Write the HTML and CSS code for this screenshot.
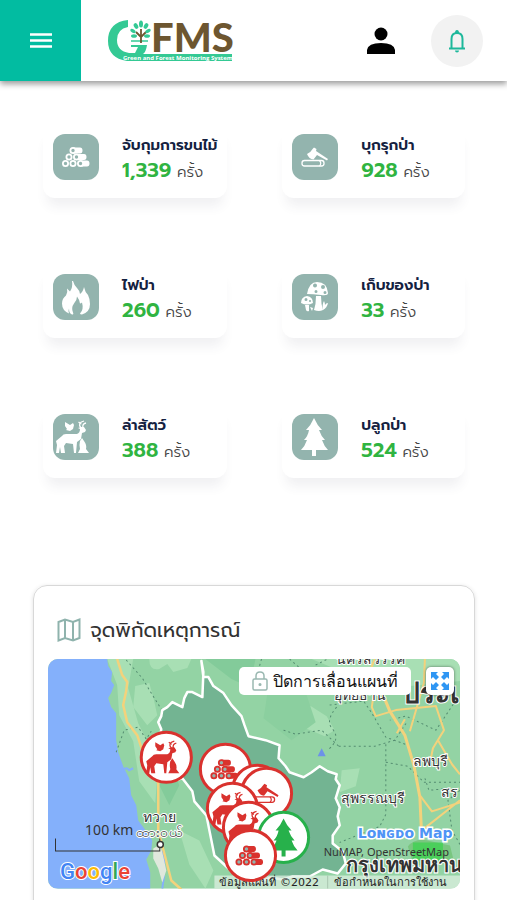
FILE: index.html
```html
<!DOCTYPE html>
<html lang="th">
<head>
<meta charset="utf-8">
<meta name="viewport" content="width=device-width, initial-scale=1">
<title>GFMS</title>
<link rel="stylesheet" href="styles.css">
</head>
<body>
<svg class="sprite" aria-hidden="true">
  <symbol id="logs" viewBox="0 0 46 46">
    <path fill="currentColor" d="M20 13.500h7q2.500 0 2.500 3t-2.500 3h-7zM23 20h8q2.500 0 2.500 3t-2.500 3h-8zM27 26.500h7q2.500 0 2.500 3t-2.500 3h-7z"/>
    <g class="log-ends" stroke="currentColor" stroke-width="1.800">
      <circle cx="20" cy="16.500" r="2.600"/><circle cx="16" cy="23" r="2.600"/><circle cx="23.500" cy="23" r="2.600"/>
      <circle cx="12.500" cy="29.500" r="2.600"/><circle cx="20" cy="29.500" r="2.600"/><circle cx="27.500" cy="29.500" r="2.600"/>
    </g>
  </symbol>
  <symbol id="axe" viewBox="0 0 46 46">
    <rect x="10" y="26.500" width="22" height="5.500" rx="2.500" fill="none" stroke="currentColor" stroke-width="1.300"/>
    <path d="M27.500 26.500q2.500 3 0 5.500" fill="none" stroke="currentColor" stroke-width="1.200"/>
    <path fill="currentColor" d="M15 20q4-2 6-5.500l1-1 2.500 1.500-.5 2L36 25l-1 1.600L25 21l-3.500 4.500q-4.500-.5-6.500-5.500z"/>
  </symbol>
  <symbol id="fire" viewBox="0 0 46 46">
    <path fill="currentColor" d="M20 7q1 4 4 7 3 3 3 6 3-2 4-7 1 5 4 8 2 4 2 9 0 8-8 10.500-2 0-2-1 4-4 2-11-1 1-2 1 0-3-3-7 0 4-3 7-3 4-1 9 1 2-1 2-3-1-3-6-1 2 0 5-7-3-7-10 0-5 4-8 2-3 1-7l3 3q3-4 2-10.500z"/>
  </symbol>
  <symbol id="mushroom" viewBox="0 0 46 46">
    <path fill="currentColor" fill-rule="evenodd" d="M15 20Q17 8 25 8q10 0 11 11 0 3-7 2-8-1-14-1zM23 9.500a2 2 0 100 4 2 2 0 000-4zM31 11a2 2 0 100 4 2 2 0 000-4zM24 16a1.500 1.500 0 100 3 1.500 1.500 0 000-3zM33 17a1.500 1.500 0 100 3 1.500 1.500 0 000-3z"/>
    <path fill="currentColor" d="M24 22h5q0 8 2 14-4 2-9 0 2-6 2-14zM13 31h4v6q-2 1-3-1zM31 36q-1-6 1-9 1 2 1 4 1-2 3-2-1 5-5 7zM20 37l-2-4 3 1z"/>
    <path fill="currentColor" fill-rule="evenodd" d="M9 29q0-6 6-7 6 1 6 7-6 3-12 0zM14 24a1.500 1.500 0 100 3 1.500 1.500 0 000-3zM18 26a1 1 0 100 2 1 1 0 000-2z"/>
  </symbol>
  <symbol id="deer" viewBox="0 0 46 46">
    <path fill="currentColor" d="M12 8l5 3 3-2 1 2-1 4-3 2-4-1 1-1-2-3zM9 22q1-2 4-2h11q3-1 3-5l-2-1 3-1h3l2 3-1 2-3 1-1 6-4 3-1 11h-2l-1-9-7-1-2 3 1 7h-4l-1-6-1 6h-3l1-8-1-4z"/>
    <path fill="none" stroke="currentColor" stroke-width="1.300" d="M28 14q-4-5 3-7M28.500 10l-3-2M30 14q-1-4 3-5"/>
    <path fill="currentColor" d="M27 27l2-3 2 3q3 4 2 8l3 4H25l2-4q-1-4 0-8z"/>
  </symbol>
  <symbol id="tree" viewBox="0 0 46 46">
    <path fill="currentColor" d="M22 4q3 7 8 12h-3q2 6 6 10h-3q2 6 6 10H24v6h-4v-6H9q4-4 6-10h-3q4-4 5-10h-3q5-5 8-12z"/>
  </symbol>
</svg>

<header class="topbar">
  <button class="menu" type="button" aria-label="เมนู">
    <svg width="22" height="16" viewBox="0 0 22 16"><path d="M0 1.500h22M0 7.500h22M0 13.500h22" stroke="#fff" stroke-width="2.400"/></svg>
  </button>
  <a class="logo" href="#" aria-label="GFMS">
    <svg width="128" height="44" viewBox="0 0 128 44">
      <path fill="#34c994" d="M21 1v7Q10 10 10 21q0 11 12 13h6l3-6h-7v-2h16q-1 7-4 9h89v7H20Q1 39 1 22 1 3 21 1z"/>
      <path stroke="#34c994" stroke-width="1.500" d="M24 22h17"/>
      <path fill="none" stroke="#6d5630" stroke-width="1.800" d="M34 24V10M34 18l-5-5M34 18l5-5"/>
      <g fill="#34c994"><ellipse cx="34" cy="5" rx="2" ry="3.500"/><ellipse cx="29" cy="7" rx="2" ry="3" transform="rotate(-30 29 7)"/><ellipse cx="39" cy="7" rx="2" ry="3" transform="rotate(30 39 7)"/><ellipse cx="26" cy="12" rx="3" ry="1.800" transform="rotate(30 26 12)"/><ellipse cx="41" cy="12" rx="3" ry="1.800" transform="rotate(-30 41 12)"/><ellipse cx="27" cy="17" rx="3" ry="1.800"/><ellipse cx="40" cy="17" rx="3" ry="1.800"/></g>
      <text class="logo-name" x="44" y="33">FMS</text>
      <text class="logo-tag" x="16" y="41">Green and Forest Monitoring System</text>
    </svg>
  </a>
  <button class="user" type="button" aria-label="ผู้ใช้">
    <svg width="28" height="28" viewBox="0 0 28 28"><circle cx="14" cy="7" r="6.500"/><path d="M0 27v-4q1-7 14-7t14 7v4z"/></svg>
  </button>
  <button class="bell" type="button" aria-label="แจ้งเตือน">
    <svg width="18" height="24" viewBox="0 0 18 24"><path d="M3.500 19V10q0-6 5.500-6t5.500 6v9" fill="none" stroke="#1db89b" stroke-width="2"/><path d="M1 19.500h16" stroke="#1db89b" stroke-width="2"/><path d="M7 4q0-3 2-3t2 3zM7 21.500h4q0 2-2 2t-2-2z" fill="#1db89b"/></svg>
  </button>
</header>

<main>
  <section class="stats">
    <article class="stat"><span class="tile"><svg><use href="#logs"/></svg></span><div><h2>จับกุมการขนไม้</h2><p><strong>1,339</strong> ครั้ง</p></div></article>
    <article class="stat"><span class="tile"><svg><use href="#axe"/></svg></span><div><h2>บุกรุกป่า</h2><p><strong>928</strong> ครั้ง</p></div></article>
    <article class="stat"><span class="tile"><svg><use href="#fire"/></svg></span><div><h2>ไฟป่า</h2><p><strong>260</strong> ครั้ง</p></div></article>
    <article class="stat"><span class="tile"><svg><use href="#mushroom"/></svg></span><div><h2>เก็บของป่า</h2><p><strong>33</strong> ครั้ง</p></div></article>
    <article class="stat"><span class="tile"><svg><use href="#deer"/></svg></span><div><h2>ล่าสัตว์</h2><p><strong>388</strong> ครั้ง</p></div></article>
    <article class="stat"><span class="tile"><svg><use href="#tree"/></svg></span><div><h2>ปลูกป่า</h2><p><strong>524</strong> ครั้ง</p></div></article>
  </section>

  <section class="events">
    <h2 class="events-title">
      <svg width="24" height="24" viewBox="0 0 24 24" fill="none" stroke="#8fb3ad" stroke-width="2"><path d="M1.500 4L8 1.500l8 2.500 6.500-2.500V20L16 22.500 8 20l-6.500 2.500zM8 1.500V20M16 4v18.500"/></svg>
      จุดพิกัดเหตุการณ์
    </h2>
    <div class="map">
      <svg class="map-canvas" viewBox="49 659 411 229">
        <rect x="49" y="659" width="411" height="229" fill="#93d3a4"/>
        <g fill="#a8dfb4">
          <path d="M108 659l10 26 2 30 14 26 6 40 16 22 3-40-20-40-10-35 5-29z"/>
          <path d="M150 659q0 12 10 10l8-5 6 8 14-4 4-9zM136 686l14-3 4 14 4 18-10 10-14-18zM295 712l16-6 16 10 8 14-10 6-14-6-12-4zM312 659h148v22l-60 6-40-8zM342 770l18-2-4 18-16 6zM180 830l20 10 14 30-8 18-16-24z"/>
        </g>
        <path fill="#83cb9a" d="M206 659h50l-6 28-18-8zM160 735l20 50-10 20-10-20z"/>
        <path fill="#8bcf9f" d="M270 680l36 12 10 30-24 18-28-22z"/>
        <path fill="#84b0fb" d="M49 659h59l1 7 4 6-1 9 3 4-3 8-3 5 3 9 5 6v27l2 12 5 14 6 12 2 17 5 10 2 15 9 12 5 8-1 10-5 9 4 13v16H49z"/>
        <path fill="none" stroke="#84b0fb" stroke-width="2" d="M122 773q4-8 8-3l4-2M163 850q4 16 0 38"/>
        <path fill="#e0e8dd" d="M154 848l7-4 3 12 3 14-4 12-4-14-5-10z"/>
        <path fill="none" stroke="#548c70" stroke-dasharray="2 3" d="M127 660l16 18 9 15 15 24M117 752l8-22 14-3 8 12 5-8M262 659l-4 14M290 659l9 8M316 665l12-6M337 707q-12 14-4 22 8 10-4 20M284 730l12 4 26-4 17 16M339 746l36 0 20-6 12-18M330 705l34-4 8 12 14 24 22 8M386 744l0 70-6 12-40 16M386 762l22 4 16 16 36 0M456 700l-20 30-30-14-16 4M425 778l4 12 20-2M460 790l-12 10 4 30 8 14"/>
        <g fill="none" stroke="#f3d27c" stroke-width="2" stroke-linejoin="round">
          <path stroke-width="2.500" d="M118 659l5 16 5 7-1 9-3 14 4 17 10 13 4 12 17 36v47l6 23 7 27 10 9"/>
          <path d="M375 659l-4 10 4 18-3 20 4 9 20-6 40-4 8 24-11 18-2 10M425 659l-1 24-14 48M405 719l-8 14M420 795l12 16 28-9M438 740l14 24 8 10M422 830l38-30"/>
          <path stroke-width="3" d="M380 687l10 24 15 24 9 30 6 32 2 44"/>
        </g>
        <path fill="#79c67f" d="M408 846q8-10 24-5l18 4 4 16-40 4z"/><path fill="#38d34c" d="M413 842h30v18h-30z" opacity=".7"/>
        <path class="region" d="M202 661l2 11-1 25-10-5-5 0-3 6-2 9-10-5-5 5-5 3-1 6-3 6 3 7-2 12 16 39 7-2 10 13 2 10 12 14 8 40 26 24 18 3 12-5 12 2 10-3 17 0 13-7 15 4 8-10-3-12-10-8 0-8 7-10-2-9 2-9-4-9 4-13-4-6 1-5-9-3-8-5-8 6-8 5-14-5-4-6-7-8 1-13-14-5-17-4-4-11-3-9-10-11-8-12-10-7-5-9-5 0z"/>
        <path d="M318 756l4-8 4 8z" fill="#6d91e8"/>
        <g class="places">
          <text x="144" y="822">ทวาย</text><text x="137" y="837">ထားဝယ်</text>
          <text x="336" y="664">นครสวรรค์</text><text x="334" y="700">อุทัยธานี</text>
          <text x="413" y="766">ลพบุรี</text><text x="441" y="797">สร</text><text x="341" y="803">สุพรรณบุรี</text>
          <text class="country" x="402" y="703">ประเ</text><text class="city" x="346" y="871">กรุงเทพมหาน</text>
        </g>
        <rect x="215" y="875" width="245" height="13" fill="#dcefe0" opacity=".75"/>
        <path d="M328 875v13" stroke="#aac7b1"/>
        <g class="credits"><text x="220" y="885">ข้อมูลแผนที่ ©2022</text><text x="334" y="885">ข้อกำหนดในการใช้งาน</text></g>
        <g class="attribution"><text x="324" y="856">NuMAP, OpenStreetMap</text><text x="86" y="835">100 km</text></g>
        <path d="M56.500 838v12.500h104V838" fill="none" stroke="#333"/>
        <circle cx="161" cy="844" r="3" fill="#fff" stroke="#333" stroke-width="1.500"/>
        <text class="longdo" x="358" y="838">Lᴏɴɢᴅᴏ Map</text>
        <text class="google" x="61" y="878"><tspan fill="#4285f4">G</tspan><tspan fill="#ea4335">o</tspan><tspan fill="#fbbc05">o</tspan><tspan fill="#4285f4">g</tspan><tspan fill="#34a853">l</tspan><tspan fill="#ea4335">e</tspan></text>
        <g class="pins">
          <g><circle cx="167" cy="757" r="25"/><use href="#deer" x="144" y="734" width="46" height="46"/></g>
          <g><circle cx="226" cy="769" r="25"/><use href="#logs" x="202" y="746" width="46" height="46"/></g>
          <g><circle cx="258" cy="790" r="25"/></g>
          <g><circle cx="267" cy="793" r="25"/><use href="#axe" x="243" y="770" width="46" height="46"/></g>
          <g><circle cx="233" cy="808" r="25"/><use href="#deer" x="210" y="785" width="46" height="46"/></g>
          <g><circle cx="249" cy="827" r="25"/><use href="#deer" x="226" y="804" width="46" height="46"/></g>
          <g class="planted"><circle cx="284" cy="837" r="25"/><use href="#tree" x="262" y="814" width="46" height="46"/></g>
          <g><circle cx="251" cy="855" r="25"/><use href="#logs" x="227" y="832" width="46" height="46"/></g>
        </g>
      </svg>
      <div class="map-tools">
        <button class="lock" type="button">
          <svg width="16" height="20" viewBox="0 0 16 20" fill="none" stroke="#9ab8b1" stroke-width="1.500"><rect x="1" y="8" width="14" height="11" rx="1.500"/><path d="M4 8V5q0-4 4-4t4 4v3"/><circle cx="8" cy="13.500" r=".8"/></svg>
          ปิดการเลื่อนแผนที่
        </button>
        <button class="expand" type="button" aria-label="เต็มจอ">
          <svg width="18" height="18" viewBox="0 0 18 18"><path fill="#2f96f3" d="M0 0h7L5 2l3 3-3 3-3-3-2 2zM18 0v7l-2-2-3 3-3-3 3-3-2-2zM0 18v-7l2 2 3-3 3 3-3 3 2 2zM18 18h-7l2-2-3-3 3-3 3 3 2-2z"/></svg>
        </button>
      </div>
    </div>
  </section>
</main>
</body>
</html>
```
FILE: styles.css
```css
* { box-sizing: border-box; }
body {
  margin: 0;
  background: #fff;
  color: #333;
  font-family: Prompt, "Noto Sans", sans-serif;
}
h2, p { margin: 0; }
button { border: 0; padding: 0; background: none; font: inherit; color: inherit; }
svg { display: block; }
.sprite { position: absolute; width: 0; height: 0; }

.topbar {
  display: flex;
  align-items: center;
  height: 81px;
  padding-right: 24px;
  background: #fff;
  box-shadow: 0 3px 6px rgba(0, 0, 0, .4);
}
.menu {
  display: grid;
  place-items: center;
  width: 81px;
  height: 81px;
  background: #02bca1;
}
.logo { margin-left: 26px; margin-right: auto; }
.logo svg { overflow: visible; }
.logo-name { font: 900 40px Lato, sans-serif; fill: #6d5630; }
.logo-tag { font: 700 6px "Open Sans", sans-serif; fill: #fff; }
.user { margin-right: 36px; }
.bell {
  display: grid;
  place-items: center;
  width: 52px;
  height: 52px;
  border-radius: 50%;
  background: #f2f2f2;
}

.stats {
  display: grid;
  grid-template-columns: 1fr 1fr;
  gap: 66px 55px;
  padding: 43px 42px 0 43px;
}
.stat {
  display: flex;
  gap: 23px;
  height: 74px;
  padding: 10px;
  border-radius: 12px;
  background: #fff;
  box-shadow: 0 12px 12px -4px rgba(60, 60, 90, .08);
  white-space: nowrap;
}
.tile {
  flex: none;
  width: 46px;
  height: 46px;
  border-radius: 12px;
  background: #93b4ae;
  color: #fff;
}
.tile svg { width: 46px; height: 46px; }
.log-ends { fill: #93b4ae; }
.pins .log-ends { fill: #fff; }
.stat h2 { color: #14213f; font-size: 15px; font-weight: 600; line-height: 22px; }
.stat p { font-size: 15px; line-height: 28px; color: #444; font-weight: 300; }
.stat strong { font-size: 20px; font-weight: 600; color: #30b441; }

.events {
  margin: 107px 32px 0 33px;
  padding: 30px 14px 40px;
  border: 1px solid #d8d8d8;
  border-radius: 14px;
  box-shadow: 0 1px 4px rgba(0, 0, 0, .12);
}
.events-title {
  display: flex;
  align-items: center;
  gap: 9px;
  padding-left: 9px;
  height: 28px;
  font-size: 20px;
  font-weight: 400;
}
.map { position: relative; margin-top: 15px; border-radius: 10px; overflow: hidden; }
.map-canvas { width: 100%; height: auto; }
.region { fill: #73b492; stroke: #fff; stroke-width: 2.5; stroke-linejoin: round; }
.places { font-family: "DejaVu Sans", sans-serif; font-size: 14px; fill: #333; stroke: #fff; stroke-width: 2; paint-order: stroke; }
.country { font-size: 28px; font-weight: 700; }
.city { font-size: 20px; font-weight: 700; }
.credits { font-family: "DejaVu Sans", sans-serif; font-size: 11px; fill: #222; }
.attribution { font-family: "Noto Sans", sans-serif; font-size: 11px; fill: #333; }
.attribution text:last-child { font-size: 14px; }
.longdo { font: 700 14px "DejaVu Sans", sans-serif; fill: #4f94f5; stroke: #fff; stroke-width: 3; paint-order: stroke; }
.google { font: 500 22px Roboto, sans-serif; stroke: #fff; stroke-width: 2; paint-order: stroke; }
.pins { color: #d9322e; }
.pins circle { fill: #fff; stroke: currentColor; stroke-width: 3; }
.planted { color: #27b14b; }
.map-tools { position: absolute; top: 8px; right: 6px; display: flex; gap: 15px; }
.lock {
  display: flex;
  align-items: center;
  gap: 5px;
  height: 28px;
  padding: 0 13px;
  border-radius: 5px;
  background: #fff;
  color: #111;
  font-family: "DejaVu Sans", sans-serif;
  font-size: 16px;
  white-space: nowrap;
}
.expand {
  display: grid;
  place-items: center;
  width: 28px;
  height: 28px;
  border-radius: 5px;
  background: #fff;
  box-shadow: 0 0 3px rgba(0, 0, 0, .5);
}
```
